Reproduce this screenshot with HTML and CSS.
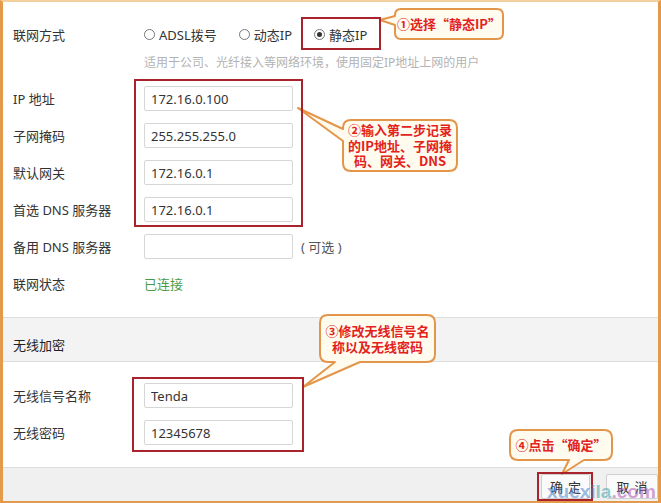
FILE: index.html
```html
<!DOCTYPE html>
<html lang="zh-CN">
<head>
    <meta charset="UTF-8">
    <meta name="viewport" content="width=device-width, initial-scale=1.0">
    <title>联网设置 - Tenda</title>
    <link rel="stylesheet" href="styles.css">
</head>
<body>
    <div class="screen">
        <div class="frame">
            <section class="panel panel-wan">
                <div class="row">
                    <span class="label">联网方式</span>
                    <div class="radios">
                        <label class="radio"><span class="dot"></span>ADSL拨号</label>
                        <label class="radio"><span class="dot"></span>动态IP</label>
                        <label class="radio"><span class="dot checked"></span>静态IP</label>
                    </div>
                </div>
                <p class="hint">适用于公司、光纤接入等网络环境，使用固定IP地址上网的用户</p>
                <div class="row"><span class="label">IP 地址</span><input class="field" value="172.16.0.100"></div>
                <div class="row"><span class="label">子网掩码</span><input class="field" value="255.255.255.0"></div>
                <div class="row"><span class="label">默认网关</span><input class="field" value="172.16.0.1"></div>
                <div class="row"><span class="label">首选 DNS 服务器</span><input class="field" value="172.16.0.1"></div>
                <div class="row"><span class="label">备用 DNS 服务器</span><input class="field" value=""><span class="note">( 可选 )</span></div>
                <div class="row"><span class="label">联网状态</span><span class="status">已连接</span></div>
            </section>

            <div class="panel-title">无线加密</div>

            <section class="panel panel-wifi">
                <div class="row"><span class="label">无线信号名称</span><input class="field" value="Tenda"></div>
                <div class="row"><span class="label">无线密码</span><input class="field" value="12345678"></div>
            </section>

            <footer class="actions">
                <button class="btn btn-ok">确定</button>
                <button class="btn btn-cancel">取消</button>
            </footer>
        </div>

        <!-- annotation layer: red boxes and speech balloons -->
        <svg class="marks" width="661" height="503" viewBox="0 0 661 503">
            <g class="balloon">
                <path d="M401 9 H497 Q503 9 503 15 V33 Q503 39 497 39 H401 Q395 39 395 33 V25 L380 20 L395 16 V15 Q395 9 401 9 Z"/>
                <path d="M351 120 H449 Q457 120 457 128 V163 Q457 171 449 171 H351 Q343 171 343 163 V141 L298 108 L343 129 V128 Q343 120 351 120 Z"/>
                <path d="M328 315 H427 Q435 315 435 323 V354 Q435 362 427 362 H360 L303 387 L335 362 H328 Q320 362 320 354 V323 Q320 315 328 315 Z"/>
                <path d="M518 430 H604 Q612 430 612 438 V452 Q612 460 604 460 H584 L562 474 L569 460 H518 Q510 460 510 452 V438 Q510 430 518 430 Z"/>
            </g>
            <g class="box">
                <rect x="302" y="18" width="78" height="31"/>
                <rect x="135" y="80" width="167" height="146"/>
                <rect x="133" y="378" width="170" height="73"/>
                <rect x="538" y="473" width="54" height="27"/>
            </g>
        </svg>

        <div class="tip tip-1">①选择“静态IP”</div>
        <div class="tip tip-2">②输入第二步记录<br>的IP地址、子网掩<br>码、网关、DNS</div>
        <div class="tip tip-3">③修改无线信号名<br>称以及无线密码</div>
        <div class="tip tip-4">④点击“确定”</div>

        <span class="watermark">xuexi<span class="wm-la">la</span><span class="wm-com">.com</span></span>
    </div>
</body>
</html>
```

FILE: styles.css
```css
:root {
    --frame: #e39a4b;
    --frame-top: #f3cf9e;
    --text: #333;
    --muted: #b3b3b3;
    --line: #dedede;
    --band: #f3f3f3;
    --mark: #a8232c;
    --tip-text: #e3221c;
}

* {
    margin: 0;
    padding: 0;
    box-sizing: border-box;
}

body {
    font-family: "Noto Sans", "Noto Sans CJK SC", sans-serif;
    font-size: 13px;
    color: var(--text);
    background: #fff;
}

.screen {
    position: relative;
    width: 661px;
    height: 503px;
    overflow: hidden;
}

.frame {
    width: 661px;
    height: 503px;
    display: flex;
    flex-direction: column;
    border: 3px solid var(--frame);
    border-top: 2px solid var(--frame-top);
    border-bottom-width: 2px;
    background: #fff;
}

.panel {
    padding: 0 10px;
}

.panel-wan {
    padding-top: 14px;
    padding-bottom: 15px;
}

.panel-wifi {
    padding-top: 15px;
    padding-bottom: 16px;
}

.row {
    display: flex;
    align-items: center;
    height: 37px;
}

.label {
    width: 131px;
    flex-shrink: 0;
    line-height: 20px;
}

.radios {
    display: flex;
    gap: 22px;
    line-height: 20px;
}

.radio {
    display: flex;
    align-items: center;
    gap: 4px;
}

.dot {
    width: 11px;
    height: 11px;
    border: 1px solid #777;
    border-radius: 50%;
    display: flex;
    align-items: center;
    justify-content: center;
}

.dot.checked::after {
    content: "";
    width: 5px;
    height: 5px;
    border-radius: 50%;
    background: #333;
}

.hint {
    height: 19px;
    line-height: 19px;
    margin: 0 0 8px 131px;
    font-size: 12px;
    color: var(--muted);
}

.field {
    width: 149px;
    height: 25px;
    padding: 0 6px;
    border: 1px solid #d6d6d6;
    border-radius: 2px;
    font: inherit;
    font-size: 13px;
    color: var(--text);
    background: #fff;
}

.note {
    margin-left: 8px;
    color: #555;
}

.status {
    color: #4b9a45;
}

.panel-title {
    padding: 17px 10px 6px;
    line-height: 20px;
    background: var(--band);
    border-top: 1px solid var(--line);
    border-bottom: 1px solid var(--line);
    color: #222;
}

.actions {
    flex: 1;
    display: flex;
    justify-content: flex-end;
    align-items: flex-start;
    gap: 16px;
    padding: 6px 0 0;
    background: #f0f0f0;
    border-top: 1px solid var(--line);
}

.btn {
    height: 25px;
    font: inherit;
    font-size: 13px;
    letter-spacing: 5px;
    padding-left: 5px;
    color: var(--text);
    background: #fafafa;
    border: 1px solid #cfcfcf;
    border-radius: 2px;
}

.btn-ok {
    width: 49px;
}

.btn-cancel {
    width: 52px;
}

.marks {
    position: absolute;
    left: 0;
    top: 0;
    pointer-events: none;
}

.balloon path {
    fill: #fffcef;
    stroke: #e3964a;
    stroke-width: 2;
    stroke-linejoin: round;
}

.box rect {
    fill: none;
    stroke: var(--mark);
    stroke-width: 2;
}

.tip {
    position: absolute;
    display: flex;
    align-items: center;
    justify-content: center;
    text-align: center;
    font-family: "Noto Sans CJK SC", sans-serif;
    font-weight: bold;
    font-size: 13px;
    line-height: 15.5px;
    color: var(--tip-text);
}

.tip-1 { left: 395px; top: 9px; width: 108px; height: 30px; }
.tip-2 { left: 343px; top: 120px; width: 114px; height: 51px; }
.tip-3 { left: 320px; top: 315px; width: 115px; height: 47px; }
.tip-4 { left: 510px; top: 430px; width: 102px; height: 30px; }

.watermark {
    position: absolute;
    left: 547px;
    top: 481px;
    font-family: "Liberation Sans", sans-serif;
    font-weight: bold;
    font-size: 19px;
    line-height: 22px;
    color: rgba(70, 130, 205, 0.55);
}

.wm-la {
    color: rgba(60, 160, 170, 0.55);
}

.wm-com {
    color: rgba(170, 80, 175, 0.55);
}
```
